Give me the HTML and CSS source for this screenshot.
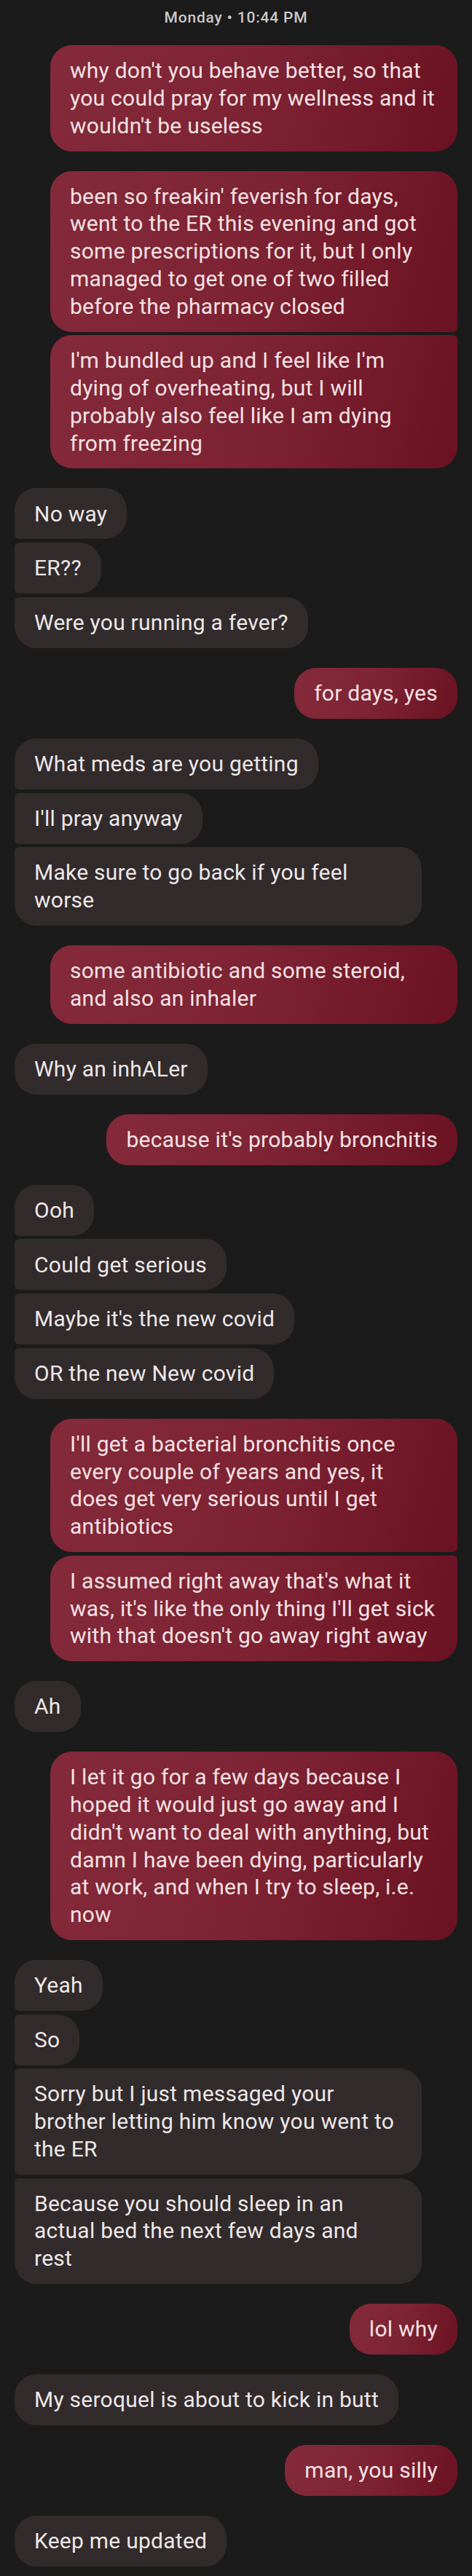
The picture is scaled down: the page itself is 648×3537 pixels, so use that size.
FILE: index.html
```html
<!DOCTYPE html>
<html lang="en">
<head>
<meta charset="utf-8">
<title>Conversation</title>
<link rel="stylesheet" href="styles.css">
</head>
<body>
<main class="thread">
  <div class="stamp">Monday • 10:44 PM</div>

  <div class="group out">
    <div class="msg multi">why don't you behave better, so that<br>you could pray for my wellness and it<br>wouldn't be useless</div>
  </div>

  <div class="group out">
    <div class="msg multi">been so freakin' feverish for days,<br>went to the ER this evening and got<br>some prescriptions for it, but I only<br>managed to get one of two filled<br>before the pharmacy closed</div>
    <div class="msg multi">I'm bundled up and I feel like I'm<br>dying of overheating, but I will<br>probably also feel like I am dying<br>from freezing</div>
  </div>

  <div class="group in">
    <div class="msg">No way</div>
    <div class="msg">ER??</div>
    <div class="msg">Were you running a fever?</div>
  </div>

  <div class="group out">
    <div class="msg">for days, yes</div>
  </div>

  <div class="group in">
    <div class="msg">What meds are you getting</div>
    <div class="msg">I'll pray anyway</div>
    <div class="msg multi">Make sure to go back if you feel<br>worse</div>
  </div>

  <div class="group out">
    <div class="msg multi">some antibiotic and some steroid,<br>and also an inhaler</div>
  </div>

  <div class="group in">
    <div class="msg">Why an inhALer</div>
  </div>

  <div class="group out">
    <div class="msg">because it's probably bronchitis</div>
  </div>

  <div class="group in">
    <div class="msg">Ooh</div>
    <div class="msg">Could get serious</div>
    <div class="msg">Maybe it's the new covid</div>
    <div class="msg">OR the new New covid</div>
  </div>

  <div class="group out">
    <div class="msg multi">I'll get a bacterial bronchitis once<br>every couple of years and yes, it<br>does get very serious until I get<br>antibiotics</div>
    <div class="msg multi">I assumed right away that's what it<br>was, it's like the only thing I'll get sick<br>with that doesn't go away right away</div>
  </div>

  <div class="group in">
    <div class="msg">Ah</div>
  </div>

  <div class="group out">
    <div class="msg multi">I let it go for a few days because I<br>hoped it would just go away and I<br>didn't want to deal with anything, but<br>damn I have been dying, particularly<br>at work, and when I try to sleep, i.e.<br>now</div>
  </div>

  <div class="group in">
    <div class="msg">Yeah</div>
    <div class="msg">So</div>
    <div class="msg multi">Sorry but I just messaged your<br>brother letting him know you went to<br>the ER</div>
    <div class="msg multi">Because you should sleep in an<br>actual bed the next few days and<br>rest</div>
  </div>

  <div class="group out">
    <div class="msg">lol why</div>
  </div>

  <div class="group in">
    <div class="msg">My seroquel is about to kick in butt</div>
  </div>

  <div class="group out">
    <div class="msg">man, you silly</div>
  </div>

  <div class="group in">
    <div class="msg">Keep me updated</div>
  </div>
</main>
</body>
</html>
```

FILE: styles.css
```css
html {
  background: #1b1b1b;
}

body {
  margin: 0;
  background: #1b1b1b;
  font-family: Roboto, "Liberation Sans", sans-serif;
}

.thread {
  width: 648px;
  box-sizing: border-box;
  padding: 0 20px 12px 20px;
  display: flex;
  flex-direction: column;
}

.stamp {
  padding-top: 13px;
  height: 22px;
  line-height: 22px;
  text-align: center;
  font-size: 21px;
  font-weight: 500;
  letter-spacing: 0.8px;
  color: #c9c9c9;
}

.group {
  display: flex;
  flex-direction: column;
  gap: 4.7px;
  margin-top: 27px;
}

.group.out {
  align-items: flex-end;
}

.group.in {
  align-items: flex-start;
}

.msg {
  box-sizing: border-box;
  max-width: 559px;
  padding: 16.125px 27px;
  font-size: 30px;
  line-height: 37.75px;
  letter-spacing: 0.25px;
  white-space: nowrap;
  border-radius: 30px;
}

.msg.multi {
  width: 559px;
}

.out .msg {
  color: #f4e2e5;
  background: linear-gradient(105deg, #842a3a 0%, #7d2333 50%, #6b1222 100%);
}

.in .msg {
  color: #ece7e7;
  background: #322b2c;
}

.out .msg:not(:last-child) {
  border-bottom-right-radius: 6px;
}

.out .msg:not(:first-child) {
  border-top-right-radius: 6px;
}

.in .msg:not(:last-child) {
  border-bottom-left-radius: 6px;
}

.in .msg:not(:first-child) {
  border-top-left-radius: 6px;
}
```
